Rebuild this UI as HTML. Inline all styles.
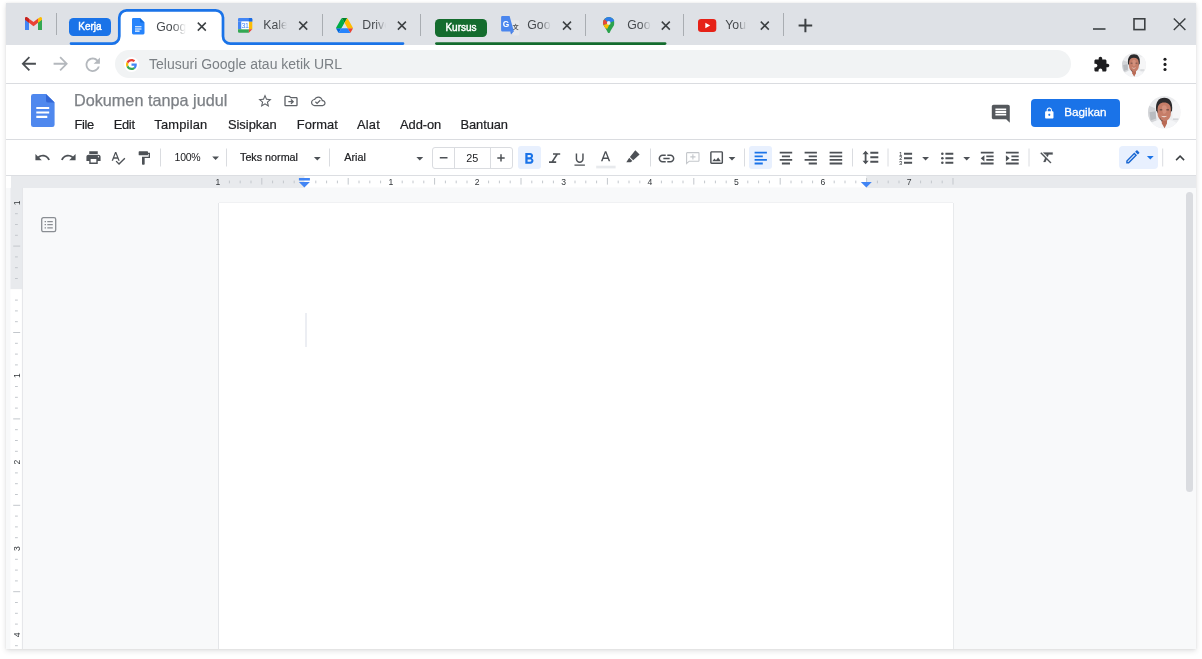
<!DOCTYPE html>
<html lang="id">
<head>
<meta charset="utf-8">
<title>Dokumen tanpa judul - Google Dokumen</title>
<style>
*{box-sizing:border-box;margin:0;padding:0}
html,body{width:1202px;height:659px;overflow:hidden;background:#fff}
body{font-family:"Liberation Sans",sans-serif;color:#202124;position:relative}
.abs{position:absolute}
#win{position:absolute;left:6.4px;top:3.2px;width:1189.4px;height:645.6px;background:#fff;box-shadow:0 2px 5px rgba(60,64,67,.16),0 0 2px rgba(60,64,67,.08);overflow:hidden}
/* all children of #win are positioned in PAGE coordinates via this shim */
#c{position:absolute;left:-6.4px;top:-3.2px;width:1202px;height:659px;will-change:transform}
#tabstrip{left:6px;top:3px;width:1190px;height:42px;background:#dee1e6}
#urlbar{left:6px;top:45px;width:1190px;height:39px;background:#fff;border-bottom:1px solid #dadce0}
#omni{left:114.7px;top:50.4px;width:956.6px;height:28px;border-radius:14px;background:#f1f3f4}
#dochead{left:6px;top:84px;width:1190px;height:56px;background:#fff;border-bottom:1px solid #dadce0}
#toolbar{left:6px;top:140px;width:1190px;height:35px;background:#fff}
#rulerh{left:6px;top:175px;width:1190px;height:12.8px;background:#e8eaed}
#docarea{left:6px;top:187.8px;width:1190px;height:462px;background:#f8f9fa}
#page{left:218.5px;top:202.5px;width:734.8px;height:460px;background:#fff;box-shadow:-1px 0 0 #e4e6e9,1px 0 0 #e8eaec,0 -1px 0 #f0f1f3}
.sep{width:1px;background:#80868b}
.tabt{font-size:13px;color:#45494d;white-space:nowrap;overflow:hidden}
.chip{color:#fff;font-size:10px;font-weight:normal;-webkit-text-stroke:.42px #fff;text-align:center;border-radius:4.5px}
.menu{font-size:12.9px;line-height:15px;color:#202124;-webkit-text-stroke:.2px #202124;top:116.9px;white-space:nowrap}
.tbtxt{font-size:11px;color:#202124;white-space:nowrap}
svg{position:absolute;overflow:visible}
.fade{-webkit-mask-image:linear-gradient(to right,#000 55%,transparent 100%);mask-image:linear-gradient(to right,#000 55%,transparent 100%)}
.tabt{font-size:12.3px;line-height:15px;height:15px}
</style>
</head>
<body>
<div id="win"><div id="c">

<!-- ============ TAB STRIP ============ -->
<div id="tabstrip" class="abs"></div>
<!-- tab shape + group underlines -->
<svg style="left:0;top:0" width="1202" height="60" viewBox="0 0 1202 60">
  <path d="M111 45 H112 A7.3 7.3 0 0 0 119.3 36.3 V17.6 A7.3 7.3 0 0 1 126.6 10.3 H215.7 A7.3 7.3 0 0 1 223 17.6 V36.3 A7.3 7.3 0 0 0 230.3 43.6 V45 Z" fill="#fff"/>
  <path d="M71 43.6 H112 A7.3 7.3 0 0 0 119.3 36.3 V17.6 A7.3 7.3 0 0 1 126.6 10.3 H215.7 A7.3 7.3 0 0 1 223 17.6 V36.3 A7.3 7.3 0 0 0 230.3 43.6 H403" fill="none" stroke="#1a73e8" stroke-width="2.7" stroke-linecap="round"/>
  <path d="M436.5 43.6 H665" fill="none" stroke="#146c2e" stroke-width="2.8" stroke-linecap="round"/>
  <!-- separators -->
  <g stroke="#a9adb2" stroke-width="1">
    <path d="M56.5 13 V35"/><path d="M322.5 14 V36"/><path d="M420.5 14 V36"/><path d="M585.5 14 V36"/><path d="M683.5 14 V36"/><path d="M783.5 13 V36"/>
  </g>
  <!-- close buttons -->
  <g stroke="#3c4043" stroke-width="1.5" fill="none">
    <path d="M197.8 22.6 l8 8 m0 -8 l-8 8"/>
    <path d="M299.2 21.6 l8 8 m0 -8 l-8 8"/>
    <path d="M397.9 21.6 l8 8 m0 -8 l-8 8"/>
    <path d="M563 21.6 l8 8 m0 -8 l-8 8"/>
    <path d="M661.8 21.6 l8 8 m0 -8 l-8 8"/>
    <path d="M760.8 21.6 l8 8 m0 -8 l-8 8"/>
  </g>
  <!-- new tab plus -->
  <path d="M798.6 25.5 H812.2 M805.4 18.7 V32.3" stroke="#3c4043" stroke-width="2" fill="none"/>
  <!-- window controls -->
  <g stroke="#3c4043" fill="none">
    <path d="M1093 29 H1105.5" stroke-width="1.6"/>
    <rect x="1134" y="18.8" width="10.8" height="10.8" stroke-width="1.6"/>
    <path d="M1173.8 18.4 l11.6 11.6 m0 -11.6 l-11.6 11.6" stroke-width="1.4"/>
  </g>
</svg>
<!-- group chips -->
<div class="abs chip" style="left:69px;top:18.3px;width:42px;height:17.7px;line-height:17.7px;background:#1a73e8">Kerja</div>
<div class="abs chip" style="left:435px;top:18.7px;width:52px;height:18px;line-height:18px;background:#146c2e">Kursus</div>
<!-- tab titles -->
<div class="abs tabt fade" style="left:156.3px;top:19.9px;width:29.5px">Google Dokumen</div>
<div class="abs tabt fade" style="left:263.3px;top:18.3px;width:24px">Kalender</div>
<div class="abs tabt fade" style="left:362.3px;top:18.3px;width:23.5px">Drive Saya</div>
<div class="abs tabt fade" style="left:527.3px;top:18.3px;width:23.5px">Google Terjemahan</div>
<div class="abs tabt fade" style="left:627.3px;top:18.3px;width:23.5px">Google Maps</div>
<div class="abs tabt fade" style="left:725.3px;top:18.3px;width:22px">YouTube</div>
<!-- favicons -->
<!-- gmail -->
<svg style="left:25px;top:17px" width="17" height="13" viewBox="0 0 17 13">
  <path d="M0 2.2 V13 H4 V5.2z" fill="#4285f4"/>
  <path d="M17 2.2 V13 H13 V5.2z" fill="#34a853"/>
  <path d="M13 1.6 L15 0.2 A1.3 1.3 0 0 1 17 1.3 V2.8 L13 5.8z" fill="#fbbc04"/>
  <path d="M0 2.8 V1.3 A1.3 1.3 0 0 1 2 0.2 L8.5 5 L13 1.6 V5.8 L8.5 9.2 L4 5.8 Z" fill="#ea4335"/>
  <path d="M0 1.3 A1.3 1.3 0 0 1 2 0.2 L4 1.7 V5.8 L0 2.8z" fill="#c5221f"/>
</svg>
<!-- docs small -->
<svg style="left:132px;top:18.3px" width="12.5" height="16.4" viewBox="0 0 12.5 16.4">
  <path d="M1.3 0 H8 L12.5 4.5 V15.1 A1.3 1.3 0 0 1 11.2 16.4 H1.3 A1.3 1.3 0 0 1 0 15.1 V1.3 A1.3 1.3 0 0 1 1.3 0z" fill="#2684fc"/>
  <path d="M8 0 L12.5 4.5 H9.1 A1.1 1.1 0 0 1 8 3.4z" fill="#0c67d6" opacity=".8"/>
  <path d="M3 8.2 H9.5 V9.3 H3z M3 10.4 H9.5 V11.5 H3z M3 12.6 H7.6 V13.7 H3z" fill="#fff"/>
</svg>
<!-- calendar -->
<svg style="left:237.7px;top:18.1px" width="14.3" height="14.700" viewBox="0 0 15 15" preserveAspectRatio="none">
  <path d="M1.2 0 H13.8 A1.2 1.2 0 0 1 15 1.2 V3.6 H0 V1.2 A1.2 1.2 0 0 1 1.2 0z" fill="#4285f4"/>
  <rect x="0" y="3.6" width="3.6" height="7.8" fill="#4285f4"/>
  <rect x="11.4" y="3.6" width="3.6" height="7.8" fill="#fbbc04"/>
  <path d="M0 11.4 H11.4 V15 H1.2 A1.2 1.2 0 0 1 0 13.8z" fill="#34a853"/>
  <path d="M11.4 11.4 H15 L11.4 15z" fill="#ea4335"/>
  <path d="M11.4 3.6 V0 H13.8 A1.2 1.2 0 0 1 15 1.2 V3.6z" fill="#1b6ae0"/>
  <rect x="3.6" y="3.6" width="7.8" height="7.8" fill="#fff"/>
  <text x="7.300" y="10.200" font-family="Liberation Sans, sans-serif" font-size="7.400" fill="#4285f4" text-anchor="middle" letter-spacing="-0.5">31</text>
</svg>
<!-- drive -->
<svg style="left:336px;top:18px" width="17" height="15" viewBox="0 0 87.3 78">
  <path d="m6.6 66.850 3.850 6.650c.800 1.400 1.950 2.500 3.300 3.300l13.750-23.800h-27.500c0 1.550.400 3.100 1.200 4.500z" fill="#0066da"/>
  <path d="m43.650 25-13.750-23.800c-1.350.800-2.500 1.900-3.300 3.300l-25.400 44a9.060 9.060 0 0 0 -1.200 4.500h27.500z" fill="#00ac47"/>
  <path d="m73.550 76.800c1.350-.800 2.500-1.900 3.300-3.300l1.600-2.750 7.650-13.250c.800-1.400 1.200-2.950 1.200-4.500h-27.502l5.852 11.500z" fill="#ea4335"/>
  <path d="m43.650 25 13.750-23.800c-1.350-.800-2.900-1.200-4.500-1.200h-18.500c-1.600 0-3.150.450-4.500 1.200z" fill="#00832d"/>
  <path d="m59.800 53h-32.300l-13.750 23.800c1.350.800 2.900 1.200 4.500 1.200h50.800c1.600 0 3.150-.450 4.500-1.200z" fill="#2684fc"/>
  <path d="m73.400 26.500-12.700-22c-.800-1.400-1.950-2.500-3.300-3.300l-13.750 23.800 16.150 28h27.450c0-1.550-.400-3.100-1.200-4.500z" fill="#ffba00"/>
</svg>
<!-- translate -->
<svg style="left:500.500px;top:16px" width="18.500" height="19.600" viewBox="0 0 18.500 19.600">
  <path d="M8 4.200 H17.100 A1.200 1.200 0 0 1 18.300 5.400 V18.300 A1.200 1.200 0 0 1 17.100 19.500 H12.400z" fill="#e6e8eb"/>
  <text x="14.700" y="13.200" font-family="Liberation Sans, Noto Sans CJK SC, sans-serif" font-size="6.200" fill="#54585d" text-anchor="middle" font-weight="bold">文</text>
  <path d="M1.300 .100 H8.600 L12.900 15.400 H1.300 A1.200 1.200 0 0 1 .100 14.200 V1.300 A1.200 1.200 0 0 1 1.300 .100z" fill="#4a86ee"/>
  <path d="M9.200 15.300 H12.900 L10 18.400z" fill="#3f7be6"/>
  <text x="5" y="10.900" font-family="Liberation Sans, sans-serif" font-size="8.400" font-weight="bold" fill="#fff" text-anchor="middle">G</text>
</svg>
<!-- maps pin -->
<svg style="left:603.400px;top:16.800px" width="11.600" height="16.300" viewBox="0 0 12 16.800">
  <defs><clipPath id="pinclip"><path d="M6 0 A6 6 0 0 1 12 6 C12 9.200 9 11.500 7.200 15.800 C6.900 16.500 6.500 16.800 6 16.800 C5.500 16.800 5.100 16.500 4.800 15.800 C3 11.500 0 9.200 0 6 A6 6 0 0 1 6 0z"/></clipPath></defs>
  <g clip-path="url(#pinclip)">
    <rect width="12" height="16.800" fill="#2ba24c"/>
    <path d="M-1 -1 H13 V3.600 L5.800 6.200 L1.600 2.600 L-1 3z" fill="#2f7de9"/>
    <path d="M1.600 2.600 L5.800 6.200 L.300 8.400 L-1 8 V3z" fill="#e8453c"/>
    <path d="M.300 8.400 L6.300 6.200 L6.800 7.400 L4.500 12 L2.300 11.600 L-.500 9z" fill="#fbbc04"/>
  </g>
  <circle cx="5.900" cy="6.100" r="1.900" fill="#eceef1"/>
</svg>
<!-- youtube -->
<svg style="left:698.200px;top:19px" width="18.300" height="13" viewBox="0 0 18.300 13">
  <rect width="18.300" height="13" rx="3.200" fill="#e62117"/>
  <path d="M7.300 3.700 L12.200 6.500 L7.300 9.300z" fill="#fff"/>
</svg>

<!-- ============ URL BAR ============ -->
<div id="urlbar" class="abs"></div>
<div id="omni" class="abs"></div>
<!-- nav arrows -->
<svg style="left:17.650px;top:53.450px" width="21.500" height="21.500" viewBox="0 0 24 24"><path d="M20 11H7.830l5.590-5.590L12 4l-8 8 8 8 1.410-1.410L7.830 13H20v-2z" fill="#4a4e52"/></svg>
<svg style="left:50.050px;top:53.450px" width="21.500" height="21.500" viewBox="0 0 24 24"><path d="M12 4l-1.410 1.410L16.170 11H4v2h12.170l-5.580 5.590L12 20l8-8z" fill="#b4b8bd"/></svg>
<svg style="left:81.850px;top:53.500px" width="21.500" height="21.500" viewBox="0 0 24 24"><path d="M17.650 6.350C16.200 4.900 14.210 4 12 4c-4.420 0-7.990 3.580-7.990 8s3.570 8 7.990 8c3.730 0 6.840-2.550 7.730-6h-2.080c-.820 2.330-3.040 4-5.650 4-3.310 0-6-2.690-6-6s2.690-6 6-6c1.660 0 3.140.690 4.220 1.780L13 11h7V4l-2.350 2.350z" fill="#b4b8bd"/></svg>
<!-- google G -->
<div class="abs" style="left:123.800px;top:56.900px;width:15.200px;height:15.200px;border-radius:50%;background:#fff"></div>
<svg style="left:126px;top:59px" width="11" height="11" viewBox="0 0 48 48">
  <path fill="#EA4335" d="M24 9.500c3.540 0 6.710 1.220 9.210 3.600l6.850-6.850C35.900 2.380 30.470 0 24 0 14.620 0 6.510 5.380 2.560 13.220l7.980 6.190C12.430 13.720 17.740 9.500 24 9.500z"/>
  <path fill="#4285F4" d="M46.980 24.550c0-1.570-.150-3.090-.380-4.550H24v9.020h12.940c-.580 2.960-2.260 5.480-4.780 7.180l7.730 6c4.510-4.180 7.090-10.360 7.090-17.650z"/>
  <path fill="#FBBC05" d="M10.530 28.590c-.480-1.450-.760-2.990-.760-4.590s.270-3.140.760-4.590l-7.980-6.190C.920 16.460 0 20.120 0 24c0 3.880.920 7.540 2.560 10.780l7.970-6.190z"/>
  <path fill="#34A853" d="M24 48c6.480 0 11.930-2.130 15.890-5.810l-7.730-6c-2.150 1.450-4.920 2.300-8.160 2.300-6.260 0-11.570-4.220-13.470-9.910l-7.980 6.190C6.510 42.620 14.620 48 24 48z"/>
</svg>
<!-- extensions puzzle -->
<svg style="left:1092.800px;top:56.300px" width="17" height="17" viewBox="0 0 24 24"><path d="M20.500 11H19V7c0-1.100-.900-2-2-2h-4V3.500C13 2.120 11.880 1 10.500 1S8 2.120 8 3.500V5H4c-1.100 0-1.990.900-1.990 2v3.800H3.500c1.490 0 2.700 1.210 2.700 2.700s-1.210 2.700-2.700 2.700H2V20c0 1.100.900 2 2 2h3.800v-1.500c0-1.490 1.210-2.700 2.700-2.700 1.490 0 2.700 1.210 2.700 2.700V22H17c1.100 0 2-.900 2-2v-4h1.500c1.380 0 2.500-1.120 2.500-2.500S21.880 11 20.500 11z" fill="#1d1d1f"/></svg>
<!-- chrome avatar -->
<svg style="left:1121.500px;top:52.600px" width="24" height="24" viewBox="0 0 32 32"><defs><clipPath id="avc1"><circle cx="16" cy="16" r="16"/></clipPath></defs><g clip-path="url(#avc1)">
  <rect width="32" height="32" fill="#ebecee"/>
  <path d="M0 9 L7 12 L8.500 24 L0 27z" fill="#d3d5d8"/>
  <path d="M1.500 16 L7.500 15 L8 22 L2.500 24z" fill="#b9bcc0"/>
  <path d="M24 6 L32 4 V24 L24 22z" fill="#f6f6f7"/>
  <path d="M24.500 22 H30 V23.300 H24.500z" fill="#c9ccd0"/>
  <path d="M0 34 C1 26.500 7 24 12.500 23 L16 32 L19.500 23 C25 24 31 26.500 32 34z" fill="#f4f5f7"/>
  <path d="M13 20 H19 L18.600 27 L16.300 31.600 L13.600 27z" fill="#b96a55"/>
  <path d="M8 14 C7 6 10.500 1.600 16 1.600 C21.500 1.600 24.500 6 23.600 14 L22 17 H9.600z" fill="#2b2a2c"/>
  <path d="M9.400 13 C9.400 8.500 12 6.300 15.800 6.300 C19.800 6.300 22.400 8.500 22.400 13 V17.500 C22.400 21.500 19.500 24.600 15.900 24.600 C12.300 24.600 9.400 21.500 9.400 17.500z" fill="#c57d68"/>
  <path d="M14 10 C15.500 8.500 18 9 18.500 11.500 C19 14.500 17.500 17.500 15.800 17.500 C14.500 17.500 13.200 13 14 10z" fill="#d89884" opacity=".7"/>
  <path d="M11.500 13.600 H14 M18 13.600 H20.600" stroke="#4a3a38" stroke-width=".9"/>
  <path d="M12.800 19.300 Q15.800 20.600 18.800 19.300 Q15.800 22.300 12.800 19.300z" fill="#f6efec"/>
  <path d="M11.500 20.500 Q13 23.800 15 24.200 L13.200 25 Q11.300 23 11.500 20.500z" fill="#5b4a48" opacity=".75"/>
</g></svg>
<!-- menu dots -->
<svg style="left:1163.300px;top:57px" width="4" height="15" viewBox="0 0 4 15"><circle cx="2" cy="2.200" r="1.550" fill="#1d1d1f"/><circle cx="2" cy="7.400" r="1.550" fill="#1d1d1f"/><circle cx="2" cy="12.500" r="1.550" fill="#1d1d1f"/></svg>
<div class="abs" style="left:149px;top:56px;font-size:14px;color:#7b8085;white-space:nowrap">Telusuri Google atau ketik URL</div>

<!-- ============ DOCS HEADER ============ -->
<div id="dochead" class="abs"></div>
<!-- docs logo -->
<svg style="left:31px;top:94px" width="23.600" height="33" viewBox="0 0 23.600 33">
  <path d="M2.300 0 H15 L23.600 8.600 V30.700 A2.300 2.300 0 0 1 21.300 33 H2.300 A2.300 2.300 0 0 1 0 30.700 V2.300 A2.300 2.300 0 0 1 2.300 0z" fill="#4f88ee"/>
  <path d="M15 0 L23.600 8.600 H17.200 A2.200 2.200 0 0 1 15 6.400z" fill="#3367d6"/>
  <path d="M5.300 13 H18.200 V15.100 H5.300z M5.300 17.400 H18.200 V19.500 H5.300z M5.300 21.800 H16.300 V23.900 H5.300z" fill="#fff"/>
</svg>
<!-- star / move / cloud -->
<svg style="left:257.300px;top:93.200px" width="16" height="16" viewBox="0 0 24 24"><path d="M22 9.240l-7.190-.620L12 2 9.190 8.630 2 9.240l5.460 4.730L5.820 21 12 17.270 18.180 21l-1.630-7.030L22 9.240zM12 15.400l-3.760 2.270 1-4.280-3.320-2.880 4.380-.380L12 6.100l1.710 4.040 4.380.380-3.320 2.880 1 4.280L12 15.400z" fill="#5f6368"/></svg>
<svg style="left:283.200px;top:92.800px" width="16" height="16" viewBox="0 0 24 24"><path d="M20 6h-8l-2-2H4c-1.100 0-2 .900-2 2v12c0 1.100.900 2 2 2h16c1.100 0 2-.900 2-2V8c0-1.100-.900-2-2-2zm0 12H4V6h5.170l2 2H20v10zm-7.160-6H8v2h4.840l-1.590 1.590L12.660 17 16.670 13l-4.010-4-1.410 1.410L12.840 12z" fill="#5f6368"/></svg>
<svg style="left:311px;top:94.100px" width="14.600" height="14.600" viewBox="0 0 24 24"><path d="M19.350 10.040C18.670 6.590 15.640 4 12 4 9.110 4 6.600 5.640 5.350 8.040 2.340 8.360 0 10.910 0 14c0 3.310 2.690 6 6 6h13c2.760 0 5-2.240 5-5 0-2.640-2.050-4.780-4.650-4.960zM19 18H6c-2.210 0-4-1.790-4-4 0-2.050 1.530-3.760 3.560-3.970l1.070-.110.500-.950C8.080 7.140 9.940 6 12 6c2.620 0 4.880 1.860 5.390 4.430l.300 1.500 1.530.110c1.560.100 2.780 1.410 2.780 2.960 0 1.650-1.350 3-3 3zm-9-3.820l-2.090-2.090L6.500 13.500 10 17l6.010-6.010-1.410-1.410z" fill="#5f6368"/></svg>
<!-- comments -->
<svg style="left:990.100px;top:103px" width="21.600" height="21.600" viewBox="0 0 24 24"><path d="M21.990 4c0-1.100-.890-2-1.990-2H4c-1.100 0-2 .900-2 2v12c0 1.100.900 2 2 2h14l4 4-.010-18zM18 14H6v-2h12v2zm0-3H6V9h12v2zm0-3H6V6h12v2z" fill="#54585c"/></svg>
<!-- share button -->
<div class="abs" style="left:1031px;top:99px;width:89px;height:28.400px;border-radius:4px;background:#1a73e8"></div>
<svg style="left:1043.200px;top:106.900px" width="12.600" height="12.600" viewBox="0 0 24 24"><path d="M18 8h-1V6c0-2.760-2.240-5-5-5S7 3.240 7 6v2H6c-1.100 0-2 .900-2 2v10c0 1.100.900 2 2 2h12c1.100 0 2-.900 2-2V10c0-1.100-.900-2-2-2zm-6 9c-1.100 0-2-.900-2-2s.900-2 2-2 2 .900 2 2-.900 2-2 2zm3.100-9H8.900V6c0-1.710 1.390-3.100 3.100-3.100 1.710 0 3.100 1.390 3.100 3.100v2z" fill="#fff"/></svg>
<div class="abs" style="left:1064.300px;top:104.600px;font-size:11.700px;line-height:14px;color:#fff;white-space:nowrap;-webkit-text-stroke:.300px #fff">Bagikan</div>
<!-- docs avatar -->
<svg style="left:1148.200px;top:95.600px" width="32.600" height="32.600" viewBox="0 0 32 32"><defs><clipPath id="avc2"><circle cx="16" cy="16" r="16"/></clipPath></defs><g clip-path="url(#avc2)">
  <rect width="32" height="32" fill="#ebecee"/>
  <path d="M0 9 L7 12 L8.500 24 L0 27z" fill="#d3d5d8"/>
  <path d="M1.500 16 L7.500 15 L8 22 L2.500 24z" fill="#b9bcc0"/>
  <path d="M24 6 L32 4 V24 L24 22z" fill="#f6f6f7"/>
  <path d="M24.500 22 H30 V23.300 H24.500z" fill="#c9ccd0"/>
  <path d="M0 34 C1 26.500 7 24 12.500 23 L16 32 L19.500 23 C25 24 31 26.500 32 34z" fill="#f4f5f7"/>
  <path d="M13 20 H19 L18.600 27 L16.300 31.600 L13.600 27z" fill="#b96a55"/>
  <path d="M8 14 C7 6 10.500 1.600 16 1.600 C21.500 1.600 24.500 6 23.600 14 L22 17 H9.600z" fill="#2b2a2c"/>
  <path d="M9.400 13 C9.400 8.500 12 6.300 15.800 6.300 C19.800 6.300 22.400 8.500 22.400 13 V17.500 C22.400 21.500 19.500 24.600 15.900 24.600 C12.300 24.600 9.400 21.500 9.400 17.500z" fill="#c57d68"/>
  <path d="M14 10 C15.500 8.500 18 9 18.500 11.500 C19 14.500 17.500 17.500 15.800 17.500 C14.500 17.500 13.200 13 14 10z" fill="#d89884" opacity=".7"/>
  <path d="M11.500 13.600 H14 M18 13.600 H20.600" stroke="#4a3a38" stroke-width=".9"/>
  <path d="M12.800 19.300 Q15.800 20.600 18.800 19.300 Q15.800 22.300 12.800 19.300z" fill="#f6efec"/>
  <path d="M11.500 20.500 Q13 23.800 15 24.200 L13.200 25 Q11.300 23 11.500 20.500z" fill="#5b4a48" opacity=".75"/>
</g></svg>
<div class="abs" style="left:74px;top:91.3px;font-size:16.2px;letter-spacing:.02px;line-height:19px;color:#7d8186;-webkit-text-stroke:.25px #7d8186;white-space:nowrap">Dokumen tanpa judul</div>
<div class="abs menu" style="left:74.6px;letter-spacing:-.37px">File</div>
<div class="abs menu" style="left:113.7px;letter-spacing:-.3px">Edit</div>
<div class="abs menu" style="left:154.3px;letter-spacing:.2px">Tampilan</div>
<div class="abs menu" style="left:227.9px">Sisipkan</div>
<div class="abs menu" style="left:296.8px;letter-spacing:.05px">Format</div>
<div class="abs menu" style="left:357px;letter-spacing:.17px">Alat</div>
<div class="abs menu" style="left:400px;letter-spacing:-.07px">Add-on</div>
<div class="abs menu" style="left:460.5px;letter-spacing:-.09px">Bantuan</div>

<!-- ============ TOOLBAR ============ -->
<div id="toolbar" class="abs"></div>
<!-- highlighted buttons -->
<div class="abs" style="left:518px;top:146px;width:23.200px;height:23px;border-radius:3px;background:#e8f0fe"></div>
<div class="abs" style="left:749.200px;top:146px;width:23.200px;height:23px;border-radius:3px;background:#e8f0fe"></div>
<div class="abs" style="left:1119.200px;top:146px;width:39px;height:22.600px;border-radius:4px;background:#e8f0fe"></div>
<!-- font size box -->
<div class="abs" style="left:432.300px;top:147.300px;width:81px;height:21.600px;border:1px solid #dadce0;border-radius:3px"></div>
<div class="abs" style="left:453.600px;top:147.300px;width:1px;height:21.600px;background:#dadce0"></div>
<div class="abs" style="left:490.200px;top:147.300px;width:1px;height:21.600px;background:#dadce0"></div>
<svg style="left:0;top:0" width="1202" height="180" viewBox="0 0 1202 180">
  <!-- separators -->
  <g stroke="#dadce0" stroke-width="1">
    <path d="M160.500 148.500 V166.500"/><path d="M226.500 148.500 V166.500"/><path d="M329.500 148.500 V166.500"/><path d="M650.500 148.500 V166.500"/><path d="M744.500 148.500 V166.500"/><path d="M852.500 148.500 V166.500"/><path d="M888 148.500 V166.500"/><path d="M1029 148.500 V166.500"/><path d="M1162.700 148.500 V166.500"/>
  </g>
  <!-- dropdown carets -->
  <g fill="#4d5156">
    <path d="M212.2 156.6 h6.800 l-3.400 3.500z"/>
    <path d="M313.9 156.9 h6.800 l-3.400 3.500z"/>
    <path d="M416.4 156.9 h6.800 l-3.400 3.500z"/>
    <path d="M728.6 156.9 h6.800 l-3.400 3.500z"/>
    <path d="M922.2 156.9 h6.800 l-3.400 3.500z"/>
    <path d="M963.3 156.9 h6.800 l-3.400 3.500z"/>
  </g>
  <path d="M1146.9 156.0 h6.800 l-3.400 3.500z" fill="#1a73e8"/>
  <!-- minus / plus -->
  <path d="M439.800 157.800 H447.500 M497.300 157.900 H504.700 M501 154.200 V161.600" stroke="#4d5156" stroke-width="1.500" fill="none"/>
  <!-- align left (active, blue) -->
  <g stroke="#1a73e8" stroke-width="1.800">
    <path d="M754.600 152.700 H766.900 M754.600 156.300 H762.800 M754.600 159.900 H766.900 M754.600 163.500 H762.800"/>
  </g>
  <g stroke="#4d5156" stroke-width="1.800">
    <!-- center -->
    <path d="M779.700 152.700 H792.200 M781.900 156.300 H790 M779.700 159.900 H792.200 M781.900 163.500 H790"/>
    <!-- right -->
    <path d="M804.600 152.700 H816.900 M808.700 156.300 H816.900 M804.600 159.900 H816.900 M808.700 163.500 H816.900"/>
    <!-- justify -->
    <path d="M829.600 152.700 H842.200 M829.600 156.300 H842.200 M829.600 159.900 H842.200 M829.600 163.500 H842.200"/>
    <!-- line spacing lines -->
    <path d="M870.300 152.700 H878.300 M870.300 157.250 H878.300 M870.300 161.800 H878.300" stroke-width="2"/>
    <path d="M865.600 152.500 V162.500" stroke-width="1.800"/>
  </g>
  <path d="M862.500 154.300 l3.100 -3.600 l3.100 3.600z M862.500 160.700 l3.100 3.600 l3.100 -3.600z" fill="#4d5156"/>
  <!-- text colour bar -->
  <rect x="596.200" y="165.700" width="19.400" height="2.700" fill="#e8eaed"/>
</svg>
<!-- icon glyphs -->
<svg style="left:33.500px;top:149px" width="17" height="17" viewBox="0 0 24 24"><path d="M12.500 8c-2.650 0-5.050.990-6.900 2.600L2 7v9h9l-3.620-3.620c1.390-1.160 3.160-1.880 5.120-1.880 3.540 0 6.550 2.310 7.600 5.500l2.370-.780C21.080 11.030 17.150 8 12.500 8z" fill="#4d5156"/></svg>
<svg style="left:59.500px;top:149px" width="17" height="17" viewBox="0 0 24 24"><path d="M18.400 10.600C16.550 8.990 14.150 8 11.500 8c-4.650 0-8.580 3.030-9.960 7.220L3.900 16c1.050-3.190 4.050-5.500 7.600-5.500 1.950 0 3.730.720 5.120 1.880L13 16h9V7l-3.600 3.600z" fill="#4d5156"/></svg>
<svg style="left:84.500px;top:149.400px" width="17" height="17" viewBox="0 0 24 24"><path d="M19 8H5c-1.660 0-3 1.340-3 3v6h4v4h12v-4h4v-6c0-1.660-1.340-3-3-3zm-3 11H8v-5h8v5zm3-7c-.550 0-1-.450-1-1s.450-1 1-1 1 .450 1 1-.450 1-1 1zm-1-9H6v4h12V3z" fill="#4d5156"/></svg>
<svg style="left:110.400px;top:150.400px" width="16" height="16" viewBox="0 0 24 24"><path d="M12.450 16h2.090L9.430 3H7.570L2.460 16h2.090l1.120-3h5.640l1.140 3zm-6.020-5L8.500 5.480 10.570 11H6.430zm15.160.590l-8.090 8.090L9.830 16l-1.410 1.410 5.090 5.090L23 13l-1.410-1.410z" fill="#4d5156"/></svg>
<svg style="left:135.600px;top:150px" width="16" height="16" viewBox="0 0 24 24"><path d="M18 4V3c0-.550-.450-1-1-1H5c-.550 0-1 .450-1 1v4c0 .550.450 1 1 1h12c.550 0 1-.450 1-1V6h1v4H9v11c0 .550.450 1 1 1h2c.550 0 1-.450 1-1v-9h8V4h-3z" fill="#4d5156"/></svg>
<div class="abs tbtxt" style="left:174.600px;top:150.900px;letter-spacing:-.3px;font-size:10.500px;line-height:13px">100%</div>
<div class="abs tbtxt" style="left:240px;top:151px;font-size:10.750px;line-height:13px;-webkit-text-stroke:.200px #202124">Teks normal</div>
<div class="abs tbtxt" style="left:344.300px;top:151.300px;font-size:10.800px;line-height:13px;-webkit-text-stroke:.200px #202124">Arial</div>
<div class="abs tbtxt" style="left:460.200px;top:152px;width:24px;text-align:center;font-size:10.800px;line-height:13px">25</div>
<!-- B I U A -->
<svg style="left:519.600px;top:150.300px" width="18.200" height="18.200" viewBox="0 0 24 24"><path d="M15.600 10.790c.970-.670 1.650-1.770 1.650-2.790 0-2.260-1.750-4-4-4H7v14h7.040c2.090 0 3.710-1.700 3.710-3.790 0-1.520-.860-2.820-2.150-3.420zM10 6.500h3c.830 0 1.500.670 1.500 1.500s-.670 1.500-1.500 1.500h-3v-3zm3.500 9H10v-3h3.500c.830 0 1.500.670 1.500 1.500s-.670 1.500-1.500 1.500z" fill="#1a73e8"/></svg>
<svg style="left:0;top:0" width="700" height="180" viewBox="0 0 700 180"><path d="M553 153.950 H560.200 M549 162.150 H556.200 M557.300 153.950 L552 162.150" stroke="#4d5156" stroke-width="1.600" fill="none"/></svg>
<svg style="left:571.300px;top:150.600px" width="17.400" height="17.400" viewBox="0 0 24 24"><path d="M12 16.500c3.040 0 5.500-2.460 5.500-5.500V3.600h-2v7.400c0 1.930-1.570 3.500-3.500 3.500s-3.500-1.570-3.500-3.500V3.600h-2V11c0 3.040 2.460 5.500 5.500 5.500zM4.800 18.700v1.700h14.400v-1.700H4.800z" fill="#4d5156"/></svg>
<svg style="left:596.800px;top:148.700px" width="17.200" height="17.200" viewBox="0 0 24 24"><path d="M11 3L5.500 17h2.250l1.120-3h6.250l1.120 3h2.250L13 3h-2zm-1.380 9L12 5.670 14.380 12H9.620z" fill="#4d5156"/></svg>
<!-- highlighter -->
<svg style="left:626px;top:150px" width="14" height="13" viewBox="0 0 14 13"><path d="M9.300 0.300 L13.600 4.600 L7.200 10.200 L3.900 6.900z M3.200 7.700 L6.400 10.900 L4.600 12.300 H0.300z" fill="#4d5156"/></svg>
<!-- link -->
<svg style="left:657.400px;top:148.600px" width="19" height="19" viewBox="0 0 24 24"><path d="M3.900 12c0-1.710 1.390-3.100 3.100-3.100h4V7H7c-2.760 0-5 2.240-5 5s2.240 5 5 5h4v-1.900H7c-1.710 0-3.100-1.390-3.100-3.100zM8 13h8v-2H8v2zm9-6h-4v1.900h4c1.710 0 3.100 1.390 3.100 3.100s-1.390 3.100-3.100 3.100h-4V17h4c2.760 0 5-2.240 5-5s-2.240-5-5-5z" fill="#4d5156"/></svg>
<!-- add comment (disabled) -->
<svg style="left:685.600px;top:152.200px" width="13.600" height="12" viewBox="0 0 13.600 12"><path d="M1.200 .600 H12.400 A.600 .600 0 0 1 13 1.200 V8.600 A.600 .600 0 0 1 12.400 9.200 H3.200 L.600 11.600 V1.200 A.600 .600 0 0 1 1.200 .600z" fill="none" stroke="#c4c7cb" stroke-width="1.100"/><path d="M6.900 2.300 V7.500 M4.300 4.900 H9.500" stroke="#c4c7cb" stroke-width="1.100" fill="none"/></svg>
<!-- image -->
<svg style="left:708px;top:148.900px" width="17.200" height="17.200" viewBox="0 0 24 24"><path d="M19 5v14H5V5h14m0-2H5c-1.100 0-2 .900-2 2v14c0 1.100.900 2 2 2h14c1.100 0 2-.900 2-2V5c0-1.100-.900-2-2-2zm-4.860 8.860l-3 3.870L9 13.140 6 17h12l-3.860-5.140z" fill="#4d5156"/></svg>
<!-- numbered + bulleted list -->
<svg style="left:0;top:0" width="1202" height="180" viewBox="0 0 1202 180">
  <g stroke="#4d5156" stroke-width="1.900" fill="none">
    <path d="M904 153.800 H912.100 M904 158.300 H912.100 M904 162.800 H912.100"/>
    <path d="M945.400 153.800 H953.300 M945.400 158.300 H953.300 M945.400 162.800 H953.300"/>
  </g>
  <g fill="#4d5156"><circle cx="942.350" cy="153.800" r="1.300"/><circle cx="942.350" cy="158.300" r="1.300"/><circle cx="942.350" cy="162.800" r="1.300"/></g>
  <g font-family="Liberation Sans, sans-serif" font-size="5.200" fill="#4d5156" stroke="#4d5156" stroke-width=".150" text-anchor="middle"><text x="900.600" y="155.700">1</text><text x="900.600" y="160.300">2</text><text x="900.600" y="164.900">3</text></g>
</svg>
<!-- indent decrease / increase -->
<svg style="left:0;top:0" width="1202" height="180" viewBox="0 0 1202 180"><g stroke="#4d5156" stroke-width="1.800" fill="none"><path d="M980.800 152.700 H993.600 M986.300 156.300 H993.600 M986.300 159.900 H993.600 M980.800 163.500 H993.600"/><path d="M1005.900 152.700 H1018.700 M1011.400 156.300 H1018.700 M1011.400 159.900 H1018.700 M1005.900 163.500 H1018.700"/></g><path d="M984.400 155.300 V161.400 L980.700 158.350z M1005.900 155.300 V161.400 L1009.600 158.350z" fill="#4d5156"/></svg>
<!-- clear formatting -->
<svg style="left:1038.800px;top:148.800px" width="16.400" height="16.400" viewBox="0 0 24 24"><path d="M3.270 5L2 6.270l6.970 6.970L6.500 19h3l1.570-3.660L16.730 21 18 19.730 3.550 5.270 3.270 5zM6 5v.180L8.820 8h2.400l-.720 1.680 2.100 2.100L14.210 8H20V5H6z" fill="#4d5156" stroke="#4d5156" stroke-width=".300"/></svg>
<!-- pencil (editing mode) -->
<svg style="left:1123.600px;top:148.200px" width="17.600" height="17.600" viewBox="0 0 24 24"><path d="M14.060 9.020l.920.920L5.920 19H5v-.920l9.060-9.060M17.660 3c-.250 0-.510.100-.700.290l-1.830 1.830 3.750 3.750 1.830-1.830c.390-.390.390-1.020 0-1.410l-2.340-2.340c-.200-.200-.450-.290-.710-.290zm-3.600 3.190L3 17.250V21h3.750L17.810 9.940l-3.750-3.750z" fill="#1967d2"/></svg>
<!-- collapse chevron -->
<svg style="left:1170.900px;top:148.600px" width="18.200" height="18.200" viewBox="0 0 24 24"><path d="M12 8l-6 6 1.410 1.410L12 10.830l4.590 4.580L18 14z" fill="#3c4043"/></svg>

<!-- ============ RULER ============ -->
<div id="rulerh" class="abs"></div>
<div class="abs" style="left:6px;top:175px;width:4.500px;height:14px;background:#fff"></div>
<svg style="left:0;top:0" width="1202" height="200" viewBox="0 0 1202 200">
  <rect x="304.4" y="175" width="561.800" height="12.800" fill="#fff"/>
  <rect x="6" y="175" width="1190" height="1" fill="#dcdee2"/>
  <path d="M229.4 180.600 V183.300 M240.2 180.600 V183.300 M251.0 180.600 V183.300 M272.6 180.600 V183.300 M283.4 180.600 V183.300 M294.2 180.600 V183.300 M315.8 180.600 V183.300 M326.6 180.600 V183.300 M337.4 180.600 V183.300 M359.0 180.600 V183.300 M369.8 180.600 V183.300 M380.6 180.600 V183.300 M402.2 180.600 V183.300 M413.0 180.600 V183.300 M423.8 180.600 V183.300 M445.4 180.600 V183.300 M456.2 180.600 V183.300 M467.0 180.600 V183.300 M488.6 180.600 V183.300 M499.4 180.600 V183.300 M510.2 180.600 V183.300 M531.8 180.600 V183.300 M542.6 180.600 V183.300 M553.4 180.600 V183.300 M575.0 180.600 V183.300 M585.8 180.600 V183.300 M596.6 180.600 V183.300 M618.2 180.600 V183.300 M629.0 180.600 V183.300 M639.8 180.600 V183.300 M661.4 180.600 V183.300 M672.2 180.600 V183.300 M683.0 180.600 V183.300 M704.6 180.600 V183.300 M715.4 180.600 V183.300 M726.2 180.600 V183.300 M747.8 180.600 V183.300 M758.6 180.600 V183.300 M769.4 180.600 V183.300 M791.0 180.600 V183.300 M801.8 180.600 V183.300 M812.6 180.600 V183.300 M834.2 180.600 V183.300 M845.0 180.600 V183.300 M855.8 180.600 V183.300 M877.4 180.600 V183.300 M888.2 180.600 V183.300 M899.0 180.600 V183.300 M920.6 180.600 V183.300 M931.4 180.600 V183.300 M942.2 180.600 V183.300" stroke="#c3c7cc" stroke-width="1" fill="none"/>
  <path d="M261.8 178 V184.600 M348.2 178 V184.600 M434.6 178 V184.600 M521.0 178 V184.600 M607.4 178 V184.600 M693.8 178 V184.600 M780.2 178 V184.600 M866.6 178 V184.600 M953.0 178 V184.600" stroke="#c3c7cc" stroke-width="1" fill="none"/>
  <g font-family="Liberation Sans, sans-serif" font-size="8.600" fill="#33373b" text-anchor="middle"><text x="218.0" y="184.800">1</text><text x="390.8" y="184.800">1</text><text x="477.2" y="184.800">2</text><text x="563.6" y="184.800">3</text><text x="650.0" y="184.800">4</text><text x="736.4" y="184.800">5</text><text x="822.8" y="184.800">6</text><text x="909.2" y="184.800">7</text></g>
  <path d="M298.900 177.900 H309.900 V180.400 H298.900z M298.900 182 H309.900 L304.400 187.500z" fill="#4285f4"/>
  <path d="M860.800 182 H871.800 L866.300 187.500z" fill="#4285f4"/>
</svg>

<!-- ============ DOC AREA ============ -->
<div id="docarea" class="abs"></div>
<div id="page" class="abs"></div>
<svg style="left:0;top:0" width="30" height="659" viewBox="0 0 30 659">
  <rect x="10.500" y="187.800" width="11.900" height="101.500" fill="#e8eaed"/>
  <rect x="10.500" y="289.300" width="11.900" height="360" fill="#fff"/>
  <path d="M22.400 187.800 V649" stroke="#e3e5e8" stroke-width="1" fill="none"/>
  <path d="M15 213.7 H17.800 M15 224.5 H17.800 M15 235.3 H17.800 M15 256.9 H17.800 M15 267.7 H17.800 M15 278.5 H17.800 M15 300.1 H17.800 M15 310.9 H17.800 M15 321.7 H17.800 M15 343.3 H17.800 M15 354.1 H17.800 M15 364.9 H17.800 M15 386.5 H17.800 M15 397.3 H17.800 M15 408.1 H17.800 M15 429.7 H17.800 M15 440.5 H17.800 M15 451.3 H17.800 M15 472.9 H17.800 M15 483.7 H17.800 M15 494.5 H17.800 M15 516.1 H17.800 M15 526.9 H17.800 M15 537.7 H17.800 M15 559.3 H17.800 M15 570.1 H17.800 M15 580.9 H17.800 M15 602.5 H17.800 M15 613.3 H17.800 M15 624.1 H17.800 M15 645.7 H17.800" stroke="#c3c7cc" stroke-width="1" fill="none"/>
  <path d="M13.200 246.1 H20.200 M13.200 332.5 H20.200 M13.200 418.9 H20.200 M13.200 505.3 H20.200 M13.200 591.7 H20.200" stroke="#c3c7cc" stroke-width="1" fill="none"/>
  <g font-family="Liberation Sans, sans-serif" font-size="8.600" fill="#33373b" text-anchor="middle"><text transform="translate(19.600 202.9) rotate(-90)">1</text><text transform="translate(19.600 375.7) rotate(-90)">1</text><text transform="translate(19.600 462.1) rotate(-90)">2</text><text transform="translate(19.600 548.5) rotate(-90)">3</text><text transform="translate(19.600 634.9) rotate(-90)">4</text></g>
</svg>
<!-- outline icon -->
<svg style="left:41.400px;top:216.600px" width="15.400" height="15.400" viewBox="0 0 15.400 15.400"><rect x=".700" y=".700" width="14" height="14" rx="1.600" fill="none" stroke="#8a8e93" stroke-width="1.300"/><path d="M3.600 4.600 H5 M6.300 4.600 H11.800 M3.600 7.700 H5 M6.300 7.700 H11.800 M3.600 10.800 H5 M6.300 10.800 H11.800" stroke="#8a8e93" stroke-width="1.300" fill="none"/></svg>
<!-- text cursor -->
<div class="abs" style="left:305.200px;top:312.500px;width:1.700px;height:34.200px;background:#eceef3"></div>
<!-- scrollbar -->
<div class="abs" style="left:1185.700px;top:192px;width:7.200px;height:300px;border-radius:4px;background:#dadce0"></div>

</div></div>
</body>
</html>
